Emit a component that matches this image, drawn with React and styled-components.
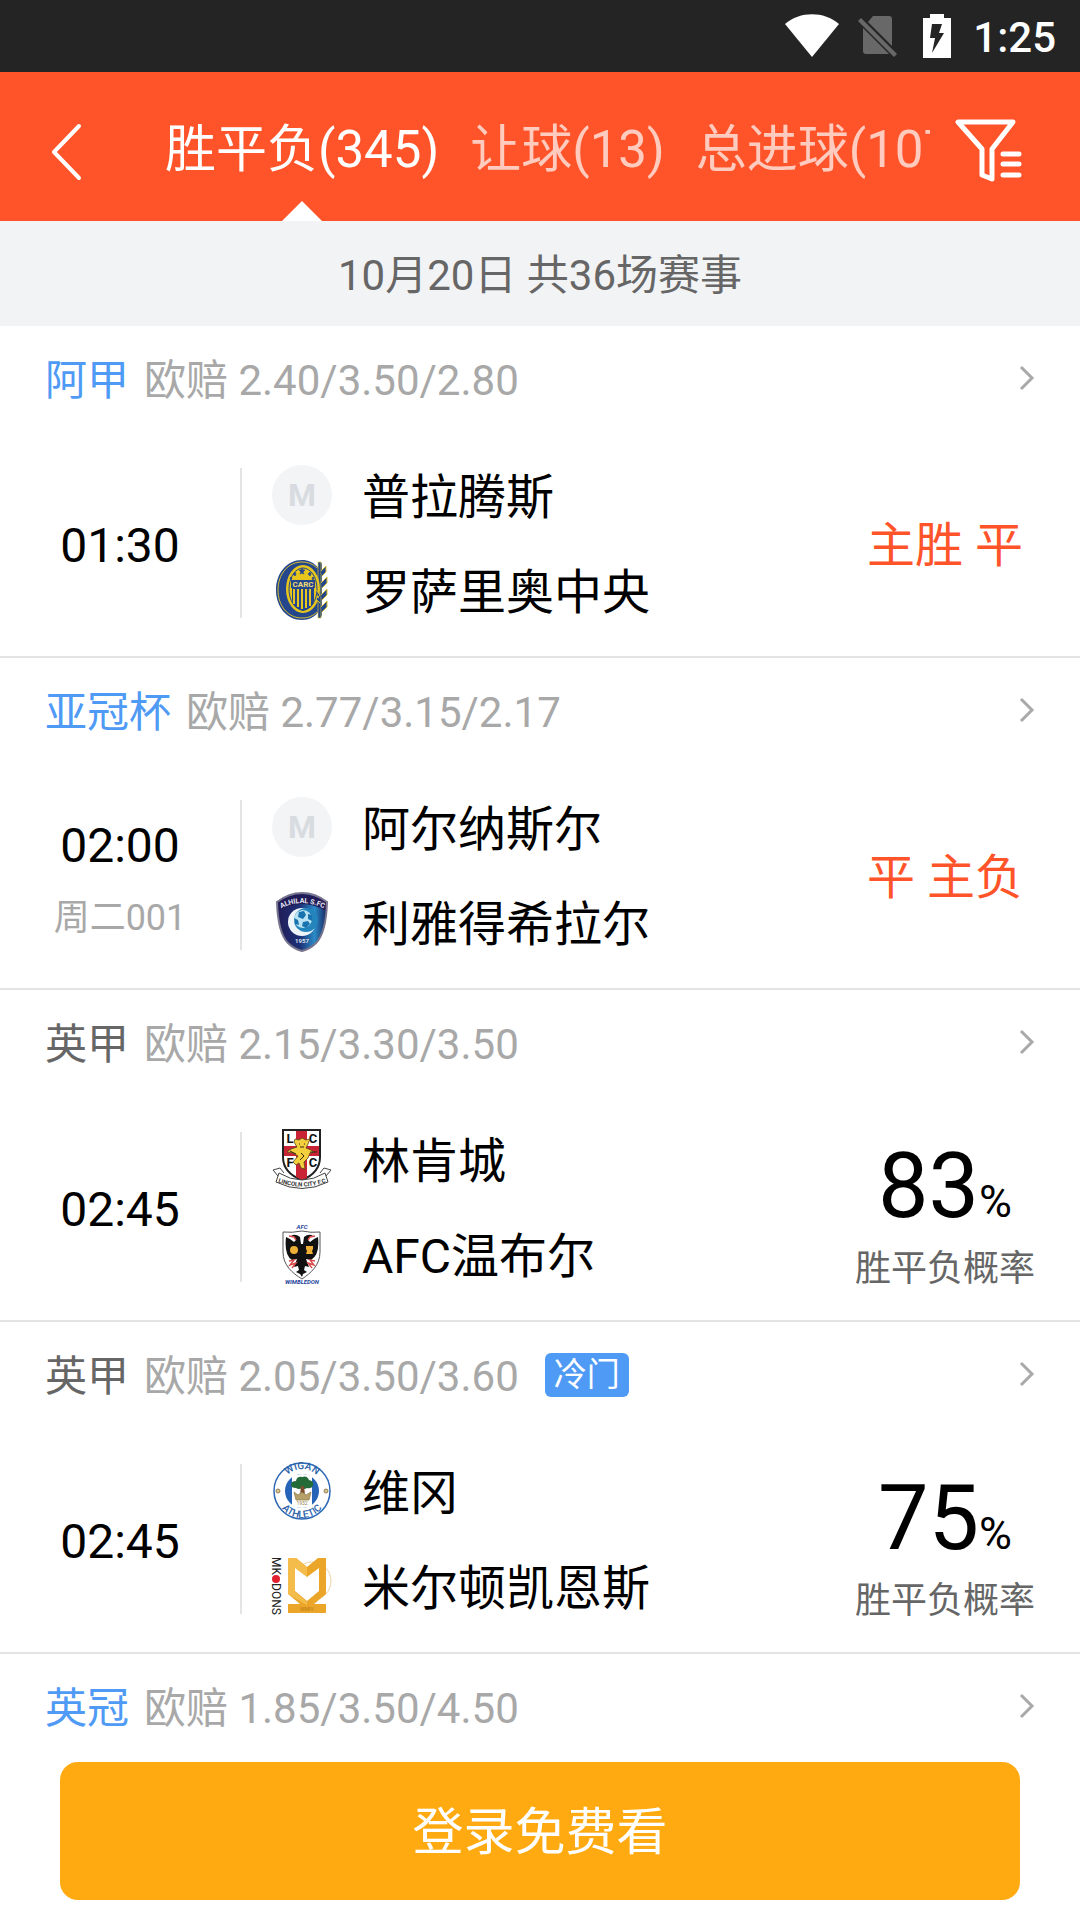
import React from "react";
import styled, { createGlobalStyle } from "styled-components";

const matches = [
  {
    league: "阿甲",
    hot: true,
    odds: "2.40/3.50/2.80",
    time: "01:30",
    teams: [
      { name: "普拉腾斯", crest: "placeholder" },
      { name: "罗萨里奥中央", crest: "rosario" },
    ],
    tip: "主胜 平",
  },
  {
    league: "亚冠杯",
    hot: true,
    odds: "2.77/3.15/2.17",
    time: "02:00",
    day: "周二001",
    teams: [
      { name: "阿尔纳斯尔", crest: "placeholder" },
      { name: "利雅得希拉尔", crest: "hilal" },
    ],
    tip: "平 主负",
  },
  {
    league: "英甲",
    odds: "2.15/3.30/3.50",
    time: "02:45",
    teams: [
      { name: "林肯城", crest: "lincoln" },
      { name: "AFC温布尔", crest: "wimbledon" },
    ],
    percent: 83,
  },
  {
    league: "英甲",
    odds: "2.05/3.50/3.60",
    badge: "冷门",
    time: "02:45",
    teams: [
      { name: "维冈", crest: "wigan" },
      { name: "米尔顿凯恩斯", crest: "mkdons" },
    ],
    percent: 75,
  },
  {
    league: "英冠",
    hot: true,
    odds: "1.85/3.50/4.50",
  },
];

function App() {
  return (
    <Page>
      <GlobalStyle />
      <StatusBar>
        <WifiIcon />
        <NoSimIcon />
        <BatteryIcon />
        <Clock>1:25</Clock>
      </StatusBar>
      <Header>
        <BackButton type="button" aria-label="返回">
          <svg width="32" height="60" viewBox="0 0 32 60" fill="none">
            <path
              d="M29 4 4 30 29 56"
              stroke="#fff"
              strokeWidth="4"
              strokeLinecap="round"
              strokeLinejoin="round"
            />
          </svg>
        </BackButton>
        <Tabs>
          <Tab type="button" $active>
            胜平负(345)
          </Tab>
          <Tab type="button">让球(13)</Tab>
          <Tab type="button">总进球(107)</Tab>
        </Tabs>
        <FilterButton type="button" aria-label="筛选">
          <FilterIcon />
        </FilterButton>
      </Header>
      <DateBar>10月20日 共36场赛事</DateBar>
      <MatchList>
        {matches.map((match) => (
          <Match key={match.league + match.odds} match={match} />
        ))}
      </MatchList>
      <Footer>
        <LoginButton type="button">登录免费看</LoginButton>
      </Footer>
    </Page>
  );
}

export default App;

function Match({ match }) {
  return (
    <MatchItem>
      <MatchHead href="#match">
        <League $hot={match.hot}>{match.league}</League>
        <Odds>欧赔 {match.odds}</Odds>
        {match.badge && <Badge>{match.badge}</Badge>}
        <Chevron width="16" height="28" viewBox="0 0 16 28" fill="none">
          <path d="M2 2 13 13 2 24" stroke="#a9a9a9" strokeWidth="3" />
        </Chevron>
      </MatchHead>
      {match.teams && (
        <MatchBody>
          <Kickoff>
            <Time>{match.time}</Time>
            {match.day && <Day>{match.day}</Day>}
          </Kickoff>
          <Divider />
          <Teams>
            {match.teams.map((team) => (
              <Team key={team.name}>
                <Crest name={team.crest} />
                <TeamName>{team.name}</TeamName>
              </Team>
            ))}
          </Teams>
          <Result>
            {match.tip && <Tip>{match.tip}</Tip>}
            {match.percent && (
              <>
                <Percent>
                  {match.percent}
                  <small>%</small>
                </Percent>
                <PercentLabel>胜平负概率</PercentLabel>
              </>
            )}
          </Result>
        </MatchBody>
      )}
    </MatchItem>
  );
}

function WifiIcon() {
  return (
    <svg width="54" height="44" viewBox="0 0 54 44">
      <path d="M0 10C15-3 39-3 54 10L27 43Z" fill="#fff" />
    </svg>
  );
}

function NoSimIcon() {
  return (
    <svg width="48" height="44" viewBox="0 0 48 44" fill="#686868">
      <path d="M16 2h16q3 0 3 3v27L11 8ZM6 14l26 26H9q-3 0-3-3Z" />
      <path d="M1 7 4 4 40 40 37 43Z" />
    </svg>
  );
}

function BatteryIcon() {
  return (
    <svg width="28" height="44" viewBox="0 0 28 44">
      <path d="M7 0h14v4h7v40H0V4h7Z" fill="#fff" />
      <path d="M9 10h10l-3 9h5L9 39l3-15H7Z" fill="#242424" />
    </svg>
  );
}

function FilterIcon() {
  return (
    <svg
      width="68"
      height="64"
      viewBox="0 0 68 64"
      fill="none"
      stroke="#fff"
      strokeWidth="5"
      strokeLinecap="round"
      strokeLinejoin="round"
    >
      <path d="M3 4h55L37 31v30l-10-4V31Z" />
      <path d="M48 36h16M48 46h16M48 57h16" />
    </svg>
  );
}

function Crest({ name }) {
  if (name === "placeholder") return <PlaceholderCrest>M</PlaceholderCrest>;
  return (
    <CrestSvg viewBox="0 0 60 60" aria-hidden="true">
      {crests[name]}
    </CrestSvg>
  );
}

const crests = {
  rosario: (
    <>
      <path
        d="M47 9C42 2 36 0 30 0 15 0 4 13 4 30s11 30 26 30c7 0 13-3 17-9l3 6V2Z"
        fill="#24468c"
      />
      <path
        d="M45 8C41 4 36 2 30 2 16 2 6 14 6 30s10 28 24 28c6 0 11-2 15-6"
        fill="none"
        stroke="#d9c030"
        strokeWidth="1"
      />
      <path d="M46 2h3v56h-3Z" fill="#24468c" stroke="#d9c030" strokeWidth=".7" />
      <ellipse cx="31" cy="29" rx="17" ry="24" fill="#e6c51d" />
      <ellipse
        cx="31"
        cy="29"
        rx="14"
        ry="21"
        fill="none"
        stroke="#24468c"
        strokeWidth="1"
      />
      <path
        d="M30 8l1 2h2l-2 2 1 2-2-1-2 1 1-2-2-2h2ZM23 12l1 2-1 2-2-2ZM38 12l1 2-1 2-2-2ZM19 17l1 1-1 2-1-2ZM41 17l1 1-1 2-1-2Z"
        fill="#24468c"
        stroke="#24468c"
        strokeWidth=".7"
      />
      <path
        d="M20 27h22v13c0 6-5 9-11 11-6-2-11-5-11-11Z"
        fill="#24468c"
      />
      <path
        d="M22 29v15M26 29v18M30 29v20M34 29v19M38 29v17"
        stroke="#e6c51d"
        strokeWidth="2"
      />
      <path d="M19 20h24v8H19Z" fill="#24468c" />
      <text
        x="31"
        y="27"
        textAnchor="middle"
        fontSize="8"
        fontWeight="700"
        fill="#f0dc74"
      >
        CARC
      </text>
      <path
        d="M49 11l5-5v6l-4 4M49 23l6-6v6l-5 5M49 35l6-6v6l-5 5M49 47l6-6v6l-5 5M44 30l4 5-4 4 4 4"
        fill="#24468c"
        stroke="#d9c030"
        strokeWidth="1"
      />
    </>
  ),
  hilal: (
    <>
      <defs>
        <linearGradient id="hilalField" x1="0" y1="0" x2="1" y2="0">
          <stop offset="0" stopColor="#211c58" />
          <stop offset=".45" stopColor="#1d2f74" />
          <stop offset=".75" stopColor="#298ac6" />
          <stop offset="1" stopColor="#1b2560" />
        </linearGradient>
      </defs>
      <path
        d="M30 1q13 0 25 9-1 31-11 41-6 6-14 8-8-2-14-8Q6 41 5 10 17 1 30 1Z"
        fill="url(#hilalField)"
      />
      <path d="M6 10Q17 2 30 2t24 8v9Q30 5 6 19Z" fill="#211c58" />
      <path
        d="M30 1q13 0 25 9-1 31-11 41-6 6-14 8-8-2-14-8Q6 41 5 10 17 1 30 1Z"
        fill="none"
        stroke="#77748d"
        strokeWidth="2"
      />
      <path id="hilalArc" d="M8 17Q30 5 53 17" fill="none" />
      <text fontSize="7" fontWeight="700" fill="#e6e7f2" textAnchor="middle">
        <textPath href="#hilalArc" startOffset="50%">
          ALHILAL S.FC
        </textPath>
      </text>
      <circle cx="30" cy="30" r="14" fill="#eef5fa" />
      <circle cx="34" cy="28" r="12" fill="#2485bd" />
      <circle cx="31" cy="27" r="9" fill="#b9e3f2" />
      <path
        d="M27 20l5-1 2 4-3 4-5-2ZM36 22l4 1v6l-4-2ZM22 26l4 2 1 5-4-1ZM31 30l5-1 2 3-4 4-4-2Z"
        fill="#1873ae"
      />
      <text
        x="30"
        y="51"
        textAnchor="middle"
        fontSize="6"
        fontWeight="700"
        fill="#dfe2ef"
      >
        1957
      </text>
    </>
  ),
  lincoln: (
    <>
      <path
        d="M11 1h37v27c0 12-8 19-18 23-11-4-19-11-19-23Z"
        fill="#fff"
        stroke="#222"
        strokeWidth="2"
      />
      <path
        d="M24 2h11v47l-5 2-6-3ZM12 17h35v10H12Z"
        fill="#c92435"
      />
      <g fontSize="13" fontWeight="700" fill="#111" textAnchor="middle">
        <text x="18" y="14">L</text>
        <text x="41" y="14">C</text>
        <text x="18" y="38">F</text>
        <text x="41" y="38">C</text>
      </g>
      <path
        d="M23 10l4 1 3-2 4 2 4-1-2 5-2 4 5 2 3 2-4 1-2 5-4 4 1 7-4-1-2-5-3 2-3-3 5-6-5-3-6-1 4-3 6-2-3-5Z"
        fill="#f3cf3e"
        stroke="#59451a"
        strokeWidth=".8"
      />
      <path
        d="M27 15h1M32 15h1M28 18h4M18 22l6 3M38 23h7M29 24l3 3-4 4"
        stroke="#35290f"
        strokeWidth="1"
        fill="none"
      />
      <path
        d="M6 47l-5-6 7-2 4 5M54 47l5-6-7-2-4 5"
        fill="#fff"
        stroke="#444"
        strokeWidth="1"
      />
      <path
        d="M7 44q23 14 46 0l3 9q-26 13-52 0Z"
        fill="#fff"
        stroke="#444"
        strokeWidth="1"
      />
      <path id="lincolnArc" d="M5 53Q30 62 55 53" fill="none" />
      <text fontSize="6" fontWeight="700" fill="#333" textAnchor="middle">
        <textPath href="#lincolnArc" startOffset="50%">
          LINCOLN CITY F.C
        </textPath>
      </text>
    </>
  ),
  wimbledon: (
    <>
      <text
        x="30"
        y="5"
        textAnchor="middle"
        fontSize="6"
        fontWeight="700"
        fontStyle="italic"
        fill="#26469b"
      >
        AFC
      </text>
      <path
        d="M11 8q9 1 19-1 9 2 18 1v20c0 13-9 21-18 27-10-6-19-14-19-27Z"
        fill="#fff"
        stroke="#555"
        strokeWidth="1"
      />
      <path
        d="M14 13q5 2 8 5l2-2q-1-4-5-4 4-3 9 1l1 7h2l1-7q5-4 9-1-4 0-5 4l2 2q3-3 8-5 2 18-7 23l-5-1 3 8-4-1-1 4 3 2-4 2-1 3-2-3-4-2 3-2-1-4-4 1 3-8-5 1q-8-5-6-23Z"
        fill="#111"
      />
      <path
        d="M17 12l5 1 2 3M43 12l-5 1-2 3M17 37l5-1-4 5 6-2-4 5M43 37l-5-1 4 5-6-2 4 5"
        fill="none"
        stroke="#d94b4b"
        strokeWidth="1.4"
      />
      <circle cx="22" cy="26" r="4" fill="#edaf35" />
      <path d="M34 22h7v3l-1 2 1 3h-7l1-3-1-2Z" fill="#edaf35" />
      <text
        x="30"
        y="60"
        textAnchor="middle"
        fontSize="6"
        fontWeight="700"
        fontStyle="italic"
        fill="#26469b"
      >
        WIMBLEDON
      </text>
    </>
  ),
  wigan: (
    <>
      <circle cx="30" cy="30" r="28" fill="#fff" stroke="#2b67b5" strokeWidth="1.5" />
      <circle cx="30" cy="30" r="17" fill="#2564b7" />
      <path d="M20 15q10-4 20 0v30q-10 4-20 0Z" fill="#fff" />
      <path
        d="M19 24q0-4 5-4 1-5 6-4 5-2 7 3 5 1 4 5-1 4-6 3-3 2-5 0-3 2-6 0-5 0-5-3Z"
        fill="#236b39"
      />
      <path d="M29 25h3l1 9h-5Z" fill="#7b4c2e" />
      <path
        d="M22 31l4 3 4-3 4 3 5-3-2 8H24Z"
        fill="#b6a16b"
        stroke="#8d7944"
        strokeWidth=".7"
      />
      <text x="30" y="44" textAnchor="middle" fontSize="5" fill="#8d7944">
        1932
      </text>
      <circle cx="6" cy="30" r="2" fill="#d8c79c" stroke="#94804f" />
      <circle cx="54" cy="30" r="2" fill="#d8c79c" stroke="#94804f" />
      <path id="wiganTop" d="M10 28A20 20 0 0 1 50 28" fill="none" />
      <path id="wiganBottom" d="M4 31A26 26 0 0 0 56 31" fill="none" />
      <g fontSize="10" fontWeight="500" fill="#2b5fa8" textAnchor="middle">
        <text>
          <textPath href="#wiganTop" startOffset="50%">
            WIGAN
          </textPath>
        </text>
        <text>
          <textPath href="#wiganBottom" startOffset="50%">
            ATHLETIC
          </textPath>
        </text>
      </g>
    </>
  ),
  mkdons: (
    <>
      <g transform="translate(0 1) rotate(90)" fontSize="12" fill="#222">
        <text x="0" y="0">MK</text>
        <circle cx="22" cy="-4" r="4" fill="#e21f2d" />
        <text x="26" y="0">DONS</text>
      </g>
      <circle cx="40" cy="25" r="19" fill="none" stroke="#ecd3a3" strokeWidth="1" />
      <path
        d="M16 2h8l11 9 11-9h8v36L42 48h12v9H16v-9h12L16 38Z"
        fill="#eba62a"
      />
      <path d="M16 2h8l11 9v10L23 12v24l12 10v3L16 38Z" fill="#f4bd4b" />
      <path d="M23 12l12 9 12-9v23L35 45 23 35Z" fill="#fff" />
      <text x="35" y="55" textAnchor="middle" fontSize="5" fill="#b87914">
        MMIV
      </text>
    </>
  ),
};

const GlobalStyle = createGlobalStyle`
  * {
    box-sizing: border-box;
  }

  body {
    margin: 0;
    background-color: #ffffff;
    color: #000000;
    font-family: Roboto, "Noto Sans CJK SC", sans-serif;
  }

  button {
    padding: 0;
    border: none;
    background: none;
    color: inherit;
    font: inherit;
    cursor: pointer;
  }
`;

const Page = styled.div`
  min-height: 100vh;
  display: flex;
  flex-direction: column;
`;

const StatusBar = styled.div`
  height: 72px;
  padding-right: 24px;
  background-color: #242424;

  display: flex;
  align-items: center;
  justify-content: flex-end;
  gap: 18px;
`;

const Clock = styled.span`
  padding: 4px 0 0 4px;
  color: #ffffff;
  font-size: 42px;
  font-weight: 500;
  line-height: 68px;
`;

const Header = styled.header`
  height: 149px;
  padding: 0 57px 0 50px;
  background-color: #ff5329;
  color: #ffffff;

  display: flex;
  align-items: stretch;
`;

const BackButton = styled.button`
  width: 115px;
  padding-top: 10px;

  display: flex;
  align-items: center;
`;

const Tabs = styled.nav`
  flex: 1;
  min-width: 0;
  overflow: hidden;

  display: flex;
  gap: 31px;
`;

const Tab = styled.button`
  position: relative;
  flex-shrink: 0;
  padding-top: 6px;
  font-size: 51px;
  line-height: 72px;
  white-space: nowrap;
  color: ${({ $active }) => ($active ? "#ffffff" : "rgba(255, 255, 255, 0.7)")};

  &::after {
    content: "";
    display: ${({ $active }) => ($active ? "block" : "none")};
    position: absolute;
    bottom: 0;
    left: 50%;
    margin-left: -20px;
    border: 20px solid transparent;
    border-top: none;
    border-bottom-color: #ffffff;
  }
`;

const FilterButton = styled.button`
  width: 93px;
  padding-top: 6px;

  display: flex;
  align-items: center;
  justify-content: flex-end;
`;

const DateBar = styled.div`
  padding: 23px 0 18px;
  background-color: #f2f3f5;
  color: #666666;
  font-size: 42px;
  line-height: 64px;
  text-align: center;
`;

const MatchList = styled.ul`
  flex: 1;
  margin: 0;
  padding: 0;
  list-style: none;
`;

const MatchItem = styled.li`
  &:not(:last-child) {
    border-bottom: 2px solid #e4e4e4;
  }
`;

const MatchHead = styled.a`
  height: 108px;
  padding: 2px 45px 0;
  font-size: 42px;
  line-height: 64px;
  text-decoration: none;

  display: flex;
  align-items: center;
`;

const League = styled.span`
  margin-right: 15px;
  color: ${({ $hot }) => ($hot ? "#4f9af5" : "#666666")};
`;

const Odds = styled.span`
  color: #a8a8a8;
`;

const Badge = styled.span`
  margin: 0 0 4px 26px;
  padding: 0 9px;
  border-radius: 6px;
  background-color: #4f9af5;
  color: #ffffff;
  font-size: 33px;
  line-height: 44px;
`;

const Chevron = styled.svg`
  margin: 0 0 4px auto;
`;

const MatchBody = styled.div`
  padding: 31px 45px 36px 0;

  display: flex;
  align-items: center;
`;

const Kickoff = styled.div`
  width: 240px;
  padding-top: 6px;
  text-align: center;
`;

const Time = styled.div`
  font-size: 48px;
  line-height: 80px;
`;

const Day = styled.div`
  color: #a8a8a8;
  font-size: 36px;
  line-height: 64px;
`;

const Divider = styled.div`
  width: 2px;
  height: 150px;
  background-color: #e4e4e4;
`;

const Teams = styled.div`
  flex: 1;
  padding-left: 30px;

  display: flex;
  flex-direction: column;
  gap: 35px;
`;

const Team = styled.div`
  display: flex;
  align-items: center;
  gap: 30px;
`;

const TeamName = styled.span`
  padding-top: 6px;
  font-size: 48px;
  line-height: 54px;
`;

const PlaceholderCrest = styled.span`
  width: 60px;
  border-radius: 50%;
  background-color: #f2f4f6;
  color: #d8dce1;
  font-size: 32px;
  font-weight: 700;
  line-height: 60px;
  text-align: center;
`;

const CrestSvg = styled.svg`
  width: 60px;
  height: 60px;
  overflow: visible;
`;

const Result = styled.div`
  width: 180px;
  text-align: center;
  white-space: nowrap;
`;

const Tip = styled.div`
  padding-top: 6px;
  color: #ff5329;
  font-size: 48px;
  line-height: 72px;
`;

const Percent = styled.div`
  padding-top: 14px;
  font-size: 90px;
  line-height: 88px;

  small {
    font-size: 45px;
    line-height: 1;
  }
`;

const PercentLabel = styled.div`
  margin-top: 23px;
  color: #666666;
  font-size: 36px;
  line-height: 30px;
`;

const Footer = styled.footer`
  position: sticky;
  bottom: 0;
  padding: 0 60px 20px;
  background-color: #ffffff;
`;

const LoginButton = styled.button`
  width: 100%;
  padding-top: 4px;
  border-radius: 18px;
  background-color: #ffaa11;
  color: #ffffff;
  font-size: 51px;
  line-height: 134px;
`;
